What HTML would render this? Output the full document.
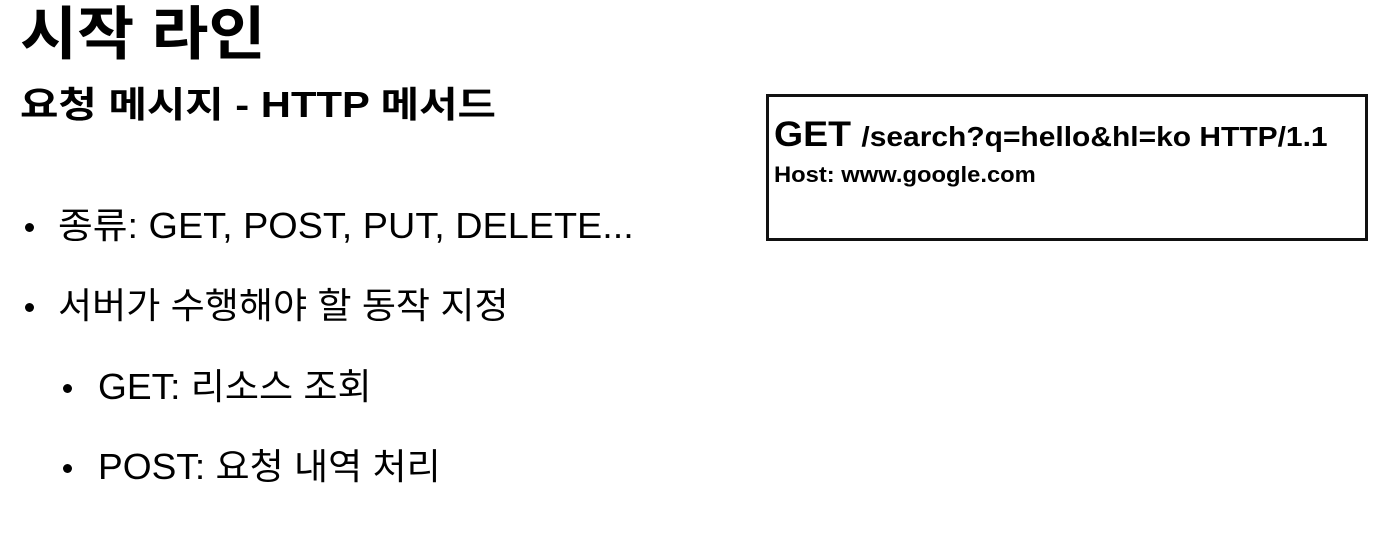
<!DOCTYPE html>
<html><head><meta charset="utf-8"><style>
body{margin:0;width:1390px;height:542px;background:#fff;position:relative;overflow:hidden;font-family:"Liberation Sans","Noto Sans CJK KR",sans-serif;color:#000}
.a{position:absolute;white-space:nowrap;line-height:1;transform-origin:0 0}
.dot{position:absolute;width:9px;height:9px;border-radius:50%;background:#000}
</style></head><body>
<div class="a" style="left:20px;top:6px;font-size:58px;font-weight:bold;transform:scaleX(1.07)">시작 라인</div>
<div class="a" style="left:20px;top:87px;font-size:36px;font-weight:bold;transform:scaleX(1.16)">요청 메시지 - HTTP 메서드</div>
<div class="dot" style="left:25px;top:223px"></div>
<div class="a" style="left:58px;top:208px;font-size:36px;transform:scaleX(1.05)">종류: GET, POST, PUT, DELETE...</div>
<div class="dot" style="left:25px;top:303px"></div>
<div class="a" style="left:58px;top:288px;font-size:36px;transform:scaleX(1.03)">서버가 수행해야 할 동작 지정</div>
<div class="dot" style="left:63px;top:384px"></div>
<div class="a" style="left:98px;top:369px;font-size:36px;transform:scaleX(1.03)">GET: 리소스 조회</div>
<div class="dot" style="left:63px;top:464px"></div>
<div class="a" style="left:98px;top:449px;font-size:36px;transform:scaleX(1.03)">POST: 요청 내역 처리</div>
<div style="position:absolute;left:766px;top:94px;width:596px;height:141px;border:3px solid #111"></div>
<div class="a" style="left:774px;top:117px;font-size:35px;font-weight:bold;transform:scaleX(1.07)">GET <span style="font-size:28px">/search?q=hello&amp;hl=ko HTTP/1.1</span></div>
<div class="a" style="left:774px;top:164px;font-size:22px;font-weight:bold;transform:scaleX(1.08)">Host: www.google.com</div>
</body></html>
